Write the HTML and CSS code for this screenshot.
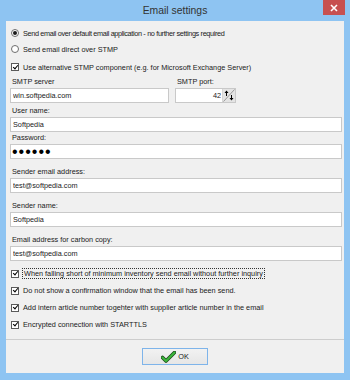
FILE: index.html
```html
<!DOCTYPE html>
<html lang="en">
<head>
  <meta charset="UTF-8" />
  <title>Email settings</title>
  <link rel="stylesheet" href="styles.css">
</head>
<body>
  <div class="window">
    <div class="titlebar">
      <span class="title">Email settings</span>
      <span class="close">
        <svg width="8" height="8" viewBox="0 0 8 8"><path d="M1 1 L7 7 M7 1 L1 7" stroke="#fff" stroke-width="1.6"/></svg>
      </span>
    </div>

    <div class="client">
      <div class="content">
        <div class="opt"><span class="radio checked"></span><span class="narrow">Send email over default email application - no further settings required</span></div>
        <div class="opt"><span class="radio"></span>Send email direct over STMP</div>
        <div class="opt opt-sep"><span class="check checked"></span>Use alternative STMP component (e.g. for Microsoft Exchange Server)</div>

        <div class="smtp-row">
          <div class="field server">
            <label>SMTP server</label>
            <input type="text" value="win.softpedia.com" />
          </div>
          <div class="field port">
            <label>SMTP port:</label>
            <div class="spin">
              <input type="text" value="42" />
              <span class="spin-btn">
                <svg width="12" height="13" viewBox="0 0 12 13">
                  <path d="M0.5 12.5 L11.5 0.5" stroke="#9a9a9a" stroke-width="1"/>
                  <path d="M1.5 4 L3.5 1.5 L5.5 4 Z M3 4 L3 7 L4 7 L4 4 Z" fill="#000"/>
                  <path d="M6.5 9 L8.5 11.5 L10.5 9 Z M8 9 L8 6 L9 6 L9 9 Z" fill="#000"/>
                </svg>
              </span>
            </div>
          </div>
        </div>

        <div class="field gap-s">
          <label>User name:</label>
          <input type="text" value="Softpedia" />
        </div>
        <div class="field gap-xs">
          <label>Password:</label>
          <input type="password" class="pw" value="secret" />
        </div>
        <div class="field gap-l">
          <label>Sender email address:</label>
          <input type="text" value="test@softpedia.com" />
        </div>
        <div class="field gap-l">
          <label>Sender name:</label>
          <input type="text" value="Softpedia" />
        </div>
        <div class="field gap-l">
          <label>Email address for carbon copy:</label>
          <input type="text" value="test@softpedia.com" />
        </div>

        <div class="checks">
          <div class="opt tall"><span class="check checked"></span><span class="focus">When falling short of minimum inventory send email without further inquiry</span></div>
          <div class="opt tall"><span class="check checked"></span>Do not show a confirmation window that the email has been send.</div>
          <div class="opt tall"><span class="check checked"></span>Add intern article number togehter with supplier article number in the email</div>
          <div class="opt tall"><span class="check checked"></span>Encrypted connection with STARTTLS</div>
        </div>
      </div>

      <div class="footer">
        <button class="ok" type="button">
          <svg width="15" height="12" viewBox="0 0 15 12">
            <path d="M1.5 6.5 L5 10 L13.5 1.5" fill="none" stroke="#1d4d1d" stroke-width="3.6" stroke-linecap="round" stroke-linejoin="round"/>
            <path d="M1.5 6.5 L5 10 L13.5 1.5" fill="none" stroke="#3cb83c" stroke-width="2" stroke-linecap="round" stroke-linejoin="round"/>
          </svg>
          OK
        </button>
      </div>
    </div>
  </div>
</body>
</html>
```

FILE: styles.css
```css
:root {
  --color-frame: #8ec4f2;
  --color-close: #c75050;
  --color-panel: #f0f0f0;
  --color-border: #c9c9c9;
  --color-text: #1a1a1a;
}

* {
  box-sizing: border-box;
}

body {
  margin: 0;
  font-family: "Liberation Sans", Arial, sans-serif;
  font-size: 7.3px;
  color: var(--color-text);
}

.window {
  width: 350px;
  height: 380px;
  background: var(--color-frame);
  padding: 0 6px 7px 6px;
  display: flex;
  flex-direction: column;
}

.titlebar {
  position: relative;
  height: 21px;
  display: flex;
  align-items: center;
  justify-content: center;
}

.title {
  font-size: 10.4px;
  color: #333;
}

.close {
  position: absolute;
  top: 0;
  right: -1px;
  width: 22px;
  height: 15px;
  background: var(--color-close);
  display: flex;
  align-items: center;
  justify-content: center;
}

.client {
  flex: 1;
  background: var(--color-panel);
  display: flex;
  flex-direction: column;
}

.content {
  flex: 1;
  padding: 4px 2px 0 4px;
}

/* radio / checkbox rows */
.opt {
  display: flex;
  align-items: center;
  gap: 4px;
  height: 16px;
  padding-left: 1px;
  white-space: nowrap;
}

.opt.tall {
  height: 17px;
}

.opt-sep {
  margin-top: 2px;
}

.narrow {
  letter-spacing: -0.35px;
}

.radio {
  width: 8px;
  height: 8px;
  border-radius: 50%;
  border: 1px solid #6d6d6d;
  background: #fff;
  display: flex;
  align-items: center;
  justify-content: center;
}

.radio.checked::after {
  content: "";
  width: 4px;
  height: 4px;
  border-radius: 50%;
  background: #1a1a1a;
}

.check {
  width: 8px;
  height: 8px;
  border: 1px solid #5a5a5a;
  background: #fff;
  position: relative;
}

.check.checked::after {
  content: "";
  position: absolute;
  left: 1.5px;
  top: -0.5px;
  width: 2px;
  height: 4px;
  border: solid #000;
  border-width: 0 1.5px 1.5px 0;
  transform: rotate(40deg);
}

.focus {
  outline: 1px dotted #333;
  padding: 0 1px;
}

/* text fields */
.smtp-row {
  display: flex;
  gap: 6px;
  margin-top: 2px;
}

.server {
  width: 159px;
}

.port {
  width: 61px;
}

.field label {
  display: block;
  height: 10px;
  line-height: 10px;
  padding-left: 2px;
}

.field input {
  display: block;
  width: 100%;
  height: 15px;
  margin-top: 1px;
  padding: 0 2px;
  border: 1px solid var(--color-border);
  background: #fff;
  font: inherit;
  color: var(--color-text);
  outline: none;
}

.field input.pw {
  font-size: 16px;
  letter-spacing: 1px;
  padding-left: 1px;
  color: #000;
}

.gap-xs {
  margin-top: 1px;
}

.gap-s {
  margin-top: 3px;
}

.gap-l {
  margin-top: 8px;
}

.spin {
  display: flex;
  height: 15px;
  margin-top: 1px;
  border: 1px solid var(--color-border);
  background: #fff;
}

.spin input {
  flex: 1;
  height: 13px;
  margin: 0;
  border: none;
  text-align: right;
  padding-right: 1px;
}

.spin-btn {
  width: 13px;
  background: #e4e4e4;
  border-left: 1px solid #d6d6d6;
  display: flex;
  align-items: center;
  justify-content: center;
}

.checks {
  margin-top: 4px;
}

/* bottom bar */
.footer {
  height: 34px;
  border-top: 1px solid #cdcdcd;
  display: flex;
  justify-content: center;
  padding-top: 8px;
}

.ok {
  width: 66px;
  height: 17px;
  border: 1px solid #7eb4ea;
  background: linear-gradient(#f2f2f2, #e6e6e6);
  display: flex;
  align-items: center;
  justify-content: center;
  gap: 2px;
  padding: 0;
  font: inherit;
  color: var(--color-text);
}
```
